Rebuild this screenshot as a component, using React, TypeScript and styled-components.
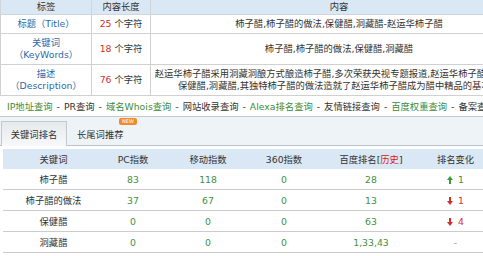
import React from "react";
import styled, { createGlobalStyle } from "styled-components";

const GlobalStyle = createGlobalStyle`
  html, body {
    margin: 0;
    padding: 0;
    background: #fff;
    overflow: hidden;
  }
  body {
    font-family: "DejaVu Sans", "Noto Sans CJK SC", sans-serif;
    font-size: 9.3px;
    color: #333;
  }
`;

const Page = styled.div`
  width: 483px;
  height: 256px;
  overflow: hidden;
`;

const InfoTable = styled.table`
  border-collapse: collapse;
  table-layout: fixed;
  width: 527px;
`;

const InfoHead = styled.th`
  height: 14px;
  padding: 0;
  background: #dae7f5;
  font-weight: normal;
  color: #333;
  border: 1px solid #d0d6dd;
  border-top: none;
  line-height: 14px;
`;

const InfoCell = styled.td<{ $h: number }>`
  height: ${(p) => p.$h}px;
  padding: 0;
  border: 1px solid #d0d0d0;
  text-align: center;
  line-height: 12.5px;
  white-space: nowrap;
  overflow: hidden;
`;

const Label = styled.span`
  color: #2f6aa8;
`;

const Count = styled.span`
  color: #d03030;
  margin-right: 3px;
`;

const LinkBar = styled.div`
  height: 20px;
  display: flex;
  align-items: center;
  padding-left: 7px;
  border-bottom: 1px solid #c8c8c8;
  white-space: nowrap;
`;

const BarLink = styled.span<{ $green?: boolean }>`
  color: ${(p) => (p.$green ? "#3b8b3b" : "#333")};
`;

const Sep = styled.span`
  color: #333;
  margin: 0 4px;
`;

const TabStrip = styled.div`
  height: 28px;
  display: flex;
  align-items: flex-end;
  padding-left: 1px;
  background: #eef3f8;
  border-bottom: 1px solid #b8c3ce;
`;

const Tab = styled.div<{ $active?: boolean }>`
  position: relative;
  height: 24px;
  margin-bottom: -1px;
  display: flex;
  align-items: center;
  justify-content: center;
  box-sizing: border-box;
  ${(p) =>
    p.$active
      ? `
    width: 66px;
    border: 1px solid #c4c9ce;
    border-bottom: none;
    background: linear-gradient(#e6e9ec, #f7f8f9);
    height: 25px;
  `
      : `
    margin-left: 10px;
  `}
`;

const NewBadge = styled.span`
  position: absolute;
  top: -4px;
  left: 42px;
  width: 18px;
  height: 7px;
  border-radius: 2px;
  background: #f08b2a;
  color: #fff;
  font-size: 5px;
  line-height: 7px;
  text-align: center;
  font-family: "DejaVu Sans", sans-serif;
`;

const RankTable = styled.table`
  border-collapse: collapse;
  table-layout: fixed;
  width: 480px;
  margin: 3px 0 0 3px;
`;

const RankHead = styled.th`
  height: 20px;
  padding: 0;
  background: #dae7f5;
  font-weight: normal;
  color: #333;
  text-align: center;
`;

const RankCell = styled.td<{ $tone?: "green" | "red" | "gray" | "dark" }>`
  height: 20px;
  padding: 0;
  text-align: center;
  border-bottom: 1px solid #cccccc;
  color: ${(p) =>
    p.$tone === "green"
      ? "#3f8f3f"
      : p.$tone === "red"
      ? "#d03030"
      : p.$tone === "gray"
      ? "#999"
      : "#333"};
`;

const History = styled.span`
  color: #d42020;
`;

const ArrowIcon = styled.svg`
  width: 6px;
  height: 8px;
  margin-right: 5px;
  vertical-align: -1px;
`;

const Arrow = ({ up }: { up: boolean }) => (
  <ArrowIcon viewBox="0 0 6 8">
    {up ? (
      <path d="M3 0 L6 4 H4 V8 H2 V4 H0 Z" fill="#3a9a3a" />
    ) : (
      <path d="M3 8 L6 4 H4 V0 H2 V4 H0 Z" fill="#d03030" />
    )}
  </ArrowIcon>
);

const rankRows = [
  { kw: "柿子醋", pc: "83", mobile: "118", s360: "0", baidu: "28", change: 1 },
  { kw: "柿子醋的做法", pc: "37", mobile: "67", s360: "0", baidu: "13", change: -1 },
  { kw: "保健醋", pc: "0", mobile: "0", s360: "0", baidu: "63", change: -4 },
  { kw: "洞藏醋", pc: "0", mobile: "0", s360: "0", baidu: "1,33,43", change: 0 },
];

const links = [
  { text: "IP地址查询", green: true },
  { text: "PR查询", green: false },
  { text: "域名Whois查询", green: true },
  { text: "网站收录查询", green: false },
  { text: "Alexa排名查询", green: true },
  { text: "友情链接查询", green: false },
  { text: "百度权重查询", green: true },
  { text: "备案查询", green: false },
];

export default function App() {
  return (
    <Page>
      <GlobalStyle />
      <InfoTable>
        <colgroup>
          <col style={{ width: 91 }} />
          <col style={{ width: 59 }} />
          <col style={{ width: 377 }} />
        </colgroup>
        <thead>
          <tr>
            <InfoHead>标签</InfoHead>
            <InfoHead>内容长度</InfoHead>
            <InfoHead>内容</InfoHead>
          </tr>
        </thead>
        <tbody>
          <tr>
            <InfoCell $h={18}>
              <Label>标题（Title）</Label>
            </InfoCell>
            <InfoCell $h={18}>
              <Count>25</Count>个字符
            </InfoCell>
            <InfoCell $h={18}>柿子醋,柿子醋的做法,保健醋,洞藏醋-赵运华柿子醋</InfoCell>
          </tr>
          <tr>
            <InfoCell $h={30}>
              <Label>
                关键词
                <br />
                （KeyWords）
              </Label>
            </InfoCell>
            <InfoCell $h={30}>
              <Count>18</Count>个字符
            </InfoCell>
            <InfoCell $h={30}>柿子醋,柿子醋的做法,保健醋,洞藏醋</InfoCell>
          </tr>
          <tr>
            <InfoCell $h={30}>
              <Label>
                描述
                <br />
                （Description）
              </Label>
            </InfoCell>
            <InfoCell $h={30}>
              <Count>76</Count>个字符
            </InfoCell>
            <InfoCell $h={30}>
              赵运华柿子醋采用洞藏洞酿方式酿造柿子醋,多次荣获央视专题报道,赵运华柿子醋是纯天然
              <br />
              保健醋,洞藏醋,其独特柿子醋的做法造就了赵运华柿子醋成为醋中精品的基石。
            </InfoCell>
          </tr>
        </tbody>
      </InfoTable>

      <LinkBar>
        {links.map((l, i) => (
          <React.Fragment key={l.text}>
            {i > 0 && <Sep>-</Sep>}
            <BarLink $green={l.green}>{l.text}</BarLink>
          </React.Fragment>
        ))}
      </LinkBar>

      <TabStrip>
        <Tab $active>关键词排名</Tab>
        <Tab>
          长尾词推荐
          <NewBadge>NEW</NewBadge>
        </Tab>
      </TabStrip>

      <RankTable>
        <colgroup>
          <col style={{ width: 101 }} />
          <col style={{ width: 58 }} />
          <col style={{ width: 92 }} />
          <col style={{ width: 60 }} />
          <col style={{ width: 114 }} />
          <col style={{ width: 55 }} />
        </colgroup>
        <thead>
          <tr>
            <RankHead>关键词</RankHead>
            <RankHead>PC指数</RankHead>
            <RankHead>移动指数</RankHead>
            <RankHead>360指数</RankHead>
            <RankHead>
              百度排名[<History>历史</History>]
            </RankHead>
            <RankHead>排名变化</RankHead>
          </tr>
        </thead>
        <tbody>
          {rankRows.map((r) => (
            <tr key={r.kw}>
              <RankCell>{r.kw}</RankCell>
              <RankCell $tone="green">{r.pc}</RankCell>
              <RankCell $tone="green">{r.mobile}</RankCell>
              <RankCell $tone="green">{r.s360}</RankCell>
              <RankCell $tone="green">{r.baidu}</RankCell>
              {r.change === 0 ? (
                <RankCell $tone="gray">-</RankCell>
              ) : (
                <RankCell $tone={r.change > 0 ? "green" : "red"}>
                  <Arrow up={r.change > 0} />
                  {Math.abs(r.change)}
                </RankCell>
              )}
            </tr>
          ))}
        </tbody>
      </RankTable>
    </Page>
  );
}
